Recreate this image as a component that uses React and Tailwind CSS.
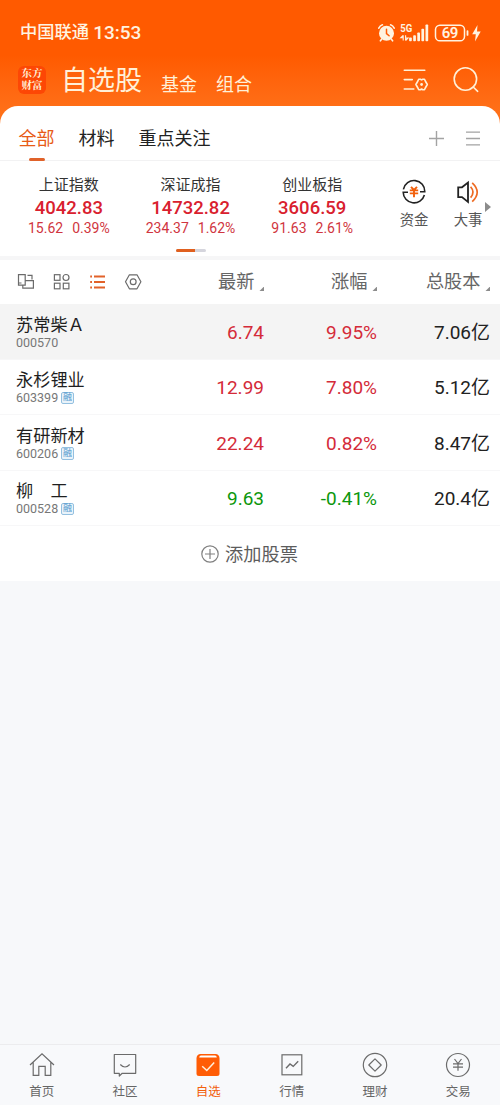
const indices = [
  { name: "上证指数", value: "4042.83", diff: "15.62", pct: "0.39%" },
  { name: "深证成指", value: "14732.82", diff: "234.37", pct: "1.62%" },
  { name: "创业板指", value: "3606.59", diff: "91.63", pct: "2.61%" },
];

const stocks = [
  { name: "苏常柴Ａ", code: "000570", price: "6.74", pct: "9.95%", cap: "7.06亿", active: true },
  { name: "永杉锂业", code: "603399", price: "12.99", pct: "7.80%", cap: "5.12亿", margin: true },
  { name: "有研新材", code: "600206", price: "22.24", pct: "0.82%", cap: "8.47亿", margin: true },
  { name: "柳　工", code: "000528", price: "9.63", pct: "-0.41%", cap: "20.4亿", margin: true, down: true },
];

function StatusBar() {
  return (
    <div className="flex h-[65px] items-center justify-between pl-5 pr-[19px] font-medium text-[#fff3e0]">
      <div className="flex items-center gap-1 leading-none">
        <span className="text-[17.3px]">中国联通</span>
        <span className="text-[19px]">13:53</span>
      </div>
      <svg width="103" height="20" viewBox="0 0 103 20" fill="none">
        <g stroke="currentColor" strokeLinecap="round">
          <circle cx="8.5" cy="10.3" r="7.5" fill="currentColor" stroke="none" />
          <path d="M.8 5.2Q2 2.6 4.4 1.8M16.2 5.2Q15 2.6 12.6 1.8M3.6 16.3 2.4 17.8M13.4 16.3l1.2 1.5" strokeWidth="1.6" />
          <path d="M8.5 6.2v4.4l2.6 2.2" stroke="#ff5c05" strokeWidth="1.5" />
        </g>
        <text x="22.3" y="9" fontSize="10" fontWeight="700" fill="currentColor" textLength="12" lengthAdjust="spacingAndGlyphs">5G</text>
        <path d="M25.2 12.3v5.2M25.2 12.3l-2.4 2.5h2.4M27.6 17.5v-5.2M27.6 17.5l2.4-2.5h-2.4" stroke="currentColor" strokeWidth="1.1" />
        <g fill="currentColor">
          <rect x="31.1" y="14.4" width="2.7" height="3.8" rx=".8" />
          <rect x="35.2" y="12.2" width="2.7" height="6" rx=".8" />
          <rect x="39.3" y="9.4" width="2.7" height="8.8" rx=".8" />
          <rect x="43.4" y="5.8" width="2.7" height="12.4" rx=".8" />
          <rect x="47.5" y="1.5" width="2.7" height="16.7" rx=".8" />
        </g>
        <rect x="57.5" y="2.2" width="29" height="15.6" rx="4.4" stroke="currentColor" strokeWidth="1.5" />
        <text x="72" y="15.2" fontSize="15" fontWeight="600" fill="currentColor" textAnchor="middle" textLength="16.5">69</text>
        <rect x="88.6" y="7.2" width="1.8" height="5.6" rx=".9" fill="currentColor" />
        <path d="M99.5 2 94.2 11.2h3.6l-.8 7.3 5.7-10h-3.7z" fill="currentColor" />
      </svg>
    </div>
  );
}

function TitleBar() {
  return (
    <div className="flex h-[41px] items-start pl-[18px] pr-[21px] text-[#fff0d8]">
      <div className="mt-px flex size-7 flex-col items-center justify-center rounded-md bg-[#fd4705] font-[Liberation_Serif,Noto_Serif_CJK_SC,Noto_Sans_CJK_SC,serif] text-[10.5px] font-bold leading-[12.5px]">
        <span>东方</span>
        <span>财富</span>
      </div>
      <h1 className="ml-[15px] mt-px text-[27px] leading-[30px]">自选股</h1>
      <span className="ml-[19px] mt-1.5 text-lg leading-7">基金</span>
      <span className="ml-[19px] mt-1.5 text-lg leading-7">组合</span>
      <svg className="ml-auto mt-[3px]" width="26" height="24" viewBox="0 0 26 24" fill="none" stroke="currentColor" strokeWidth="1.6" strokeLinecap="round" strokeLinejoin="round">
        <path d="M1.3 2.3h20.5M1.3 11.6h8M1.3 21h9.5" />
        <path d="M15.7 11.2h1.7l1.2.7 1.2-.7h1.7l.8 1.8 2 3.5-2 3.5-.8 1.7h-1.7l-1.2-.7-1.2.7h-1.7l-.8-1.7-2-3.5 2-3.5z" />
        <circle cx="18.6" cy="16.5" r="1.4" fill="currentColor" stroke="none" />
      </svg>
      <svg className="ml-6" width="26" height="28" viewBox="0 0 26 28" fill="none" stroke="currentColor" strokeWidth="1.6" strokeLinecap="round">
        <circle cx="12.4" cy="14" r="11.2" />
        <path d="m20.2 22 4.5 4.3" />
      </svg>
    </div>
  );
}

function GroupTabs() {
  return (
    <div className="flex h-[55px] items-start border-b border-[#f2f2f3] pl-[18.5px] pr-5 text-lg leading-7 text-[#222]">
      <div className="flex h-full flex-col items-center pt-[19px] text-[#e85b16]">
        <span>全部</span>
        <span className="mt-[5px] h-[3px] w-4 shrink-0 rounded-full bg-[#e0622a]" />
      </div>
      <span className="ml-6 mt-[19px]">材料</span>
      <span className="ml-6 mt-[19px]">重点关注</span>
      <svg className="ml-auto mt-[25px]" width="15" height="15" viewBox="0 0 15 15" stroke="#a3a3a3" strokeWidth="1.4">
        <path d="M7.5 0v15M0 7.5h15" />
      </svg>
      <svg className="ml-[22px] mt-[25px]" width="14" height="15" viewBox="0 0 14 15" stroke="#a3a3a3" strokeWidth="1.3">
        <path d="M0 1.2h14M0 7.5h14M0 13.8h14" />
      </svg>
    </div>
  );
}

function IndexPanel() {
  return (
    <div className="relative flex h-[95px] pl-2 pt-3">
      {indices.map((item) => (
        <div key={item.name} className="flex w-[121.7px] flex-col items-center whitespace-nowrap">
          <span className="text-[15px] leading-6 text-[#333]">{item.name}</span>
          <span className="text-[18.5px] font-medium leading-[22px] text-[#d9202e]">{item.value}</span>
          <span className="flex gap-[9px] text-[14px] leading-[19px] text-[#d03540]">
            <span>{item.diff}</span>
            <span>{item.pct}</span>
          </span>
        </div>
      ))}
      <div className="ml-[27px] flex w-7 flex-col items-center pt-1.5 text-[14.4px] leading-5 text-[#555]">
        <svg width="26" height="26" viewBox="0 0 26 26" fill="none" strokeWidth="1.6">
          <path d="M2.4 10.3A10.8 10.8 0 0 1 23.8 12.8H19M23.4 16A10.8 10.8 0 0 1 2.2 13.2H7" stroke="#222" />
          <path d="m10 7.8 3 3.2 3-3.2M8.8 11.4h8.4M8.8 14.4h8.4M13 11v7.2" stroke="#f2600c" strokeWidth="1.9" />
        </svg>
        <span className="mt-1.5 whitespace-nowrap">资金</span>
      </div>
      <div className="ml-[26px] flex w-7 flex-col items-center pt-1.5 text-[14.4px] leading-5 text-[#555]">
        <svg width="26" height="26" viewBox="0 0 26 26" fill="none">
          <path d="M3.2 8.3H7l6-4.8v19.4l-6-4.8H3.2z" stroke="#222" strokeWidth="1.8" />
          <path d="M15.6 7.8q4.8 5.4 0 10.8M17.2 3.8q10 9.4 0 18.8" stroke="#ee6a22" strokeWidth="1.7" />
        </svg>
        <span className="mt-1.5 whitespace-nowrap">大事</span>
      </div>
      <svg className="ml-[3px] mt-[29px]" width="6" height="10" viewBox="0 0 6 10" fill="#8c8c8c">
        <path d="M0 0 6 5 0 10z" />
      </svg>
      <div className="absolute left-[176px] top-[88px] flex h-[2.5px] w-[30px] overflow-hidden rounded-full bg-[#d5d5dd]">
        <span className="w-[19px] bg-[#e0601f]" />
      </div>
    </div>
  );
}

function SortLabel({ children, className }) {
  return (
    <div className={`flex items-end justify-end gap-1 ${className}`}>
      <span>{children}</span>
      <svg className="mb-[5px]" width="5.5" height="5.5" viewBox="0 0 5 5" fill="#8c8c8c">
        <path d="M5 0v5H0z" />
      </svg>
    </div>
  );
}

function ListHeader() {
  return (
    <div className="flex h-11 items-center pl-[17px] pr-[10px] text-[18.2px] leading-7 text-[#666]">
      <svg width="126" height="18" viewBox="0 0 126 18" fill="none" stroke="#6b6b6b" strokeWidth="1.2">
        <path d="M8.2 12.2H1.5V1.6h6.7zM10.5 2.4H15v4M8.2 7.6h8.2v7.6H5.8v-3M1.5 10h3" />
        <rect x="37.4" y="1.7" width="5.6" height="5.6" />
        <circle cx="49" cy="4.5" r="3" />
        <rect x="37.4" y="10.2" width="5.6" height="5.6" />
        <rect x="46.3" y="10.2" width="5.6" height="5.6" />
        <path d="M73.2 3.5h1.8M77 3.5h11M73.2 9h1.8M77 9h11M73.2 14.5h1.8M77 14.5h11" stroke="#e2622a" strokeWidth="1.8" />
        <path d="M112.4 1.8h7.6l3.9 7-3.9 7h-7.6l-3.9-7z" strokeLinejoin="round" />
        <circle cx="116.2" cy="8.8" r="2.9" />
      </svg>
      <SortLabel className="w-[121px]">最新</SortLabel>
      <SortLabel className="w-[113px]">涨幅</SortLabel>
      <SortLabel className="w-[113px]">总股本</SortLabel>
    </div>
  );
}

function StockRow({ stock }) {
  return (
    <div className={`flex h-[55.5px] items-center border-b border-[#f7f7f8] pl-4 pr-[10px] pt-[3px] text-[19px] ${stock.active ? "bg-[#f4f4f4]" : ""}`}>
      <div className="w-[120px]">
        <div className="text-[17.2px] leading-5 text-[#1f1f1f]">{stock.name}</div>
        <div className="flex items-center gap-[3px] text-[12.5px] leading-4 text-[#777]">
          <span>{stock.code}</span>
          {stock.margin && (
            <span className="mb-px flex size-[12.5px] items-center justify-center rounded-xs border border-[#94c0e0] bg-[#e9f3fa] text-[9px] leading-none text-[#4c93cb]">
              融
            </span>
          )}
        </div>
      </div>
      <span className={`w-32 text-right ${stock.down ? "text-[#0c970c]" : "text-[#d42b39]"}`}>{stock.price}</span>
      <span className={`w-[113px] text-right ${stock.down ? "text-[#0c970c]" : "text-[#d42b39]"}`}>{stock.pct}</span>
      <span className="w-[113px] text-right text-[#222]">{stock.cap}</span>
    </div>
  );
}

function AddStock() {
  return (
    <div className="flex h-[55px] items-center justify-center gap-[6px] pr-px pt-[3px] text-[18.2px] text-[#5c5c5c]">
      <svg className="mb-[3px]" width="18" height="18" viewBox="0 0 18 18" fill="none" stroke="#808080" strokeWidth="1.2">
        <circle cx="9" cy="9" r="8.2" />
        <path d="M9 4v10M4 9h10" />
      </svg>
      <span>添加股票</span>
    </div>
  );
}

const navItems = [
  { label: "首页", icon: <path d="M1 13 13 1.8 25 13M4.2 10.5v12.8h5.6v-9h6.4v9h5.6V10.5" /> },
  {
    label: "社区",
    icon: (
      <>
        <path d="M2.3 2.5h21.4v18.8H10.2L7.3 24v-2.7h-5z" strokeLinejoin="round" />
        <path d="M8.3 12.5q4.7 5 9.4 0" />
      </>
    ),
  },
  {
    label: "自选",
    active: true,
    icon: (
      <>
        <path d="M5 2h16q3.5.5 3.5 4.5v15q0 2.5-2.5 2.5H4q-2.5 0-2.5-2.5v-15Q1.5 2.5 5 2z" fill="#ff5c05" stroke="none" />
        <path d="M4.2 5.6Q4.4 3.5 6 3.5h14q1.6 0 1.8 2.1z" fill="#fff" stroke="none" />
        <path d="m7.2 14.2 4.6 4.3 7.4-8" stroke="#fff0dc" strokeWidth="1.5" />
      </>
    ),
  },
  {
    label: "行情",
    icon: (
      <>
        <rect x="3" y="2.8" width="19.8" height="20" />
        <path d="m7 16.2 4-4.2 3.2 2.4 5-5.2" strokeWidth="1.4" />
      </>
    ),
  },
  {
    label: "理财",
    icon: (
      <>
        <circle cx="13" cy="13" r="11.7" />
        <path d="m13 6.8 6.2 6.2-6.2 6.2L6.8 13z" strokeLinejoin="round" />
      </>
    ),
  },
  {
    label: "交易",
    icon: (
      <>
        <circle cx="13" cy="13" r="11.5" />
        <path d="m9.5 7 3.5 4.5L16.5 7M8 11.8h10M8 15.2h10M13 11.5v7.3" />
      </>
    ),
  },
];

function BottomNav() {
  return (
    <nav className="mt-auto flex h-[61px] border-t border-[#ececee] bg-[#f8f9fb]">
      {navItems.map((item) => (
        <div key={item.label} className={`flex flex-1 flex-col items-center pt-[7px] text-[12.5px] leading-5 ${item.active ? "text-[#f2600c]" : "text-[#666]"}`}>
          <svg width="26" height="26" viewBox="0 0 26 26" fill="none" stroke="#6b6b6b" strokeWidth="1.2">
            {item.icon}
          </svg>
          <span className="mt-1">{item.label}</span>
        </div>
      ))}
    </nav>
  );
}

export default function App() {
  return (
    <div className="flex h-[1105px] w-[500px] flex-col overflow-hidden bg-[#f7f8fa] font-[Roboto,Noto_Sans_CJK_SC,sans-serif]">
      <div className="bg-linear-to-b from-[#ff5a00] from-[55px] to-[#ff7018] to-[112px]">
        <StatusBar />
        <TitleBar />
        <div className="rounded-t-[18px] bg-white">
          <GroupTabs />
          <IndexPanel />
        </div>
      </div>
      <div className="h-1 bg-[#f6f6f7]" />
      <div className="bg-white">
        <ListHeader />
        {stocks.map((stock) => (
          <StockRow key={stock.code} stock={stock} />
        ))}
        <AddStock />
      </div>
      <BottomNav />
    </div>
  );
}
